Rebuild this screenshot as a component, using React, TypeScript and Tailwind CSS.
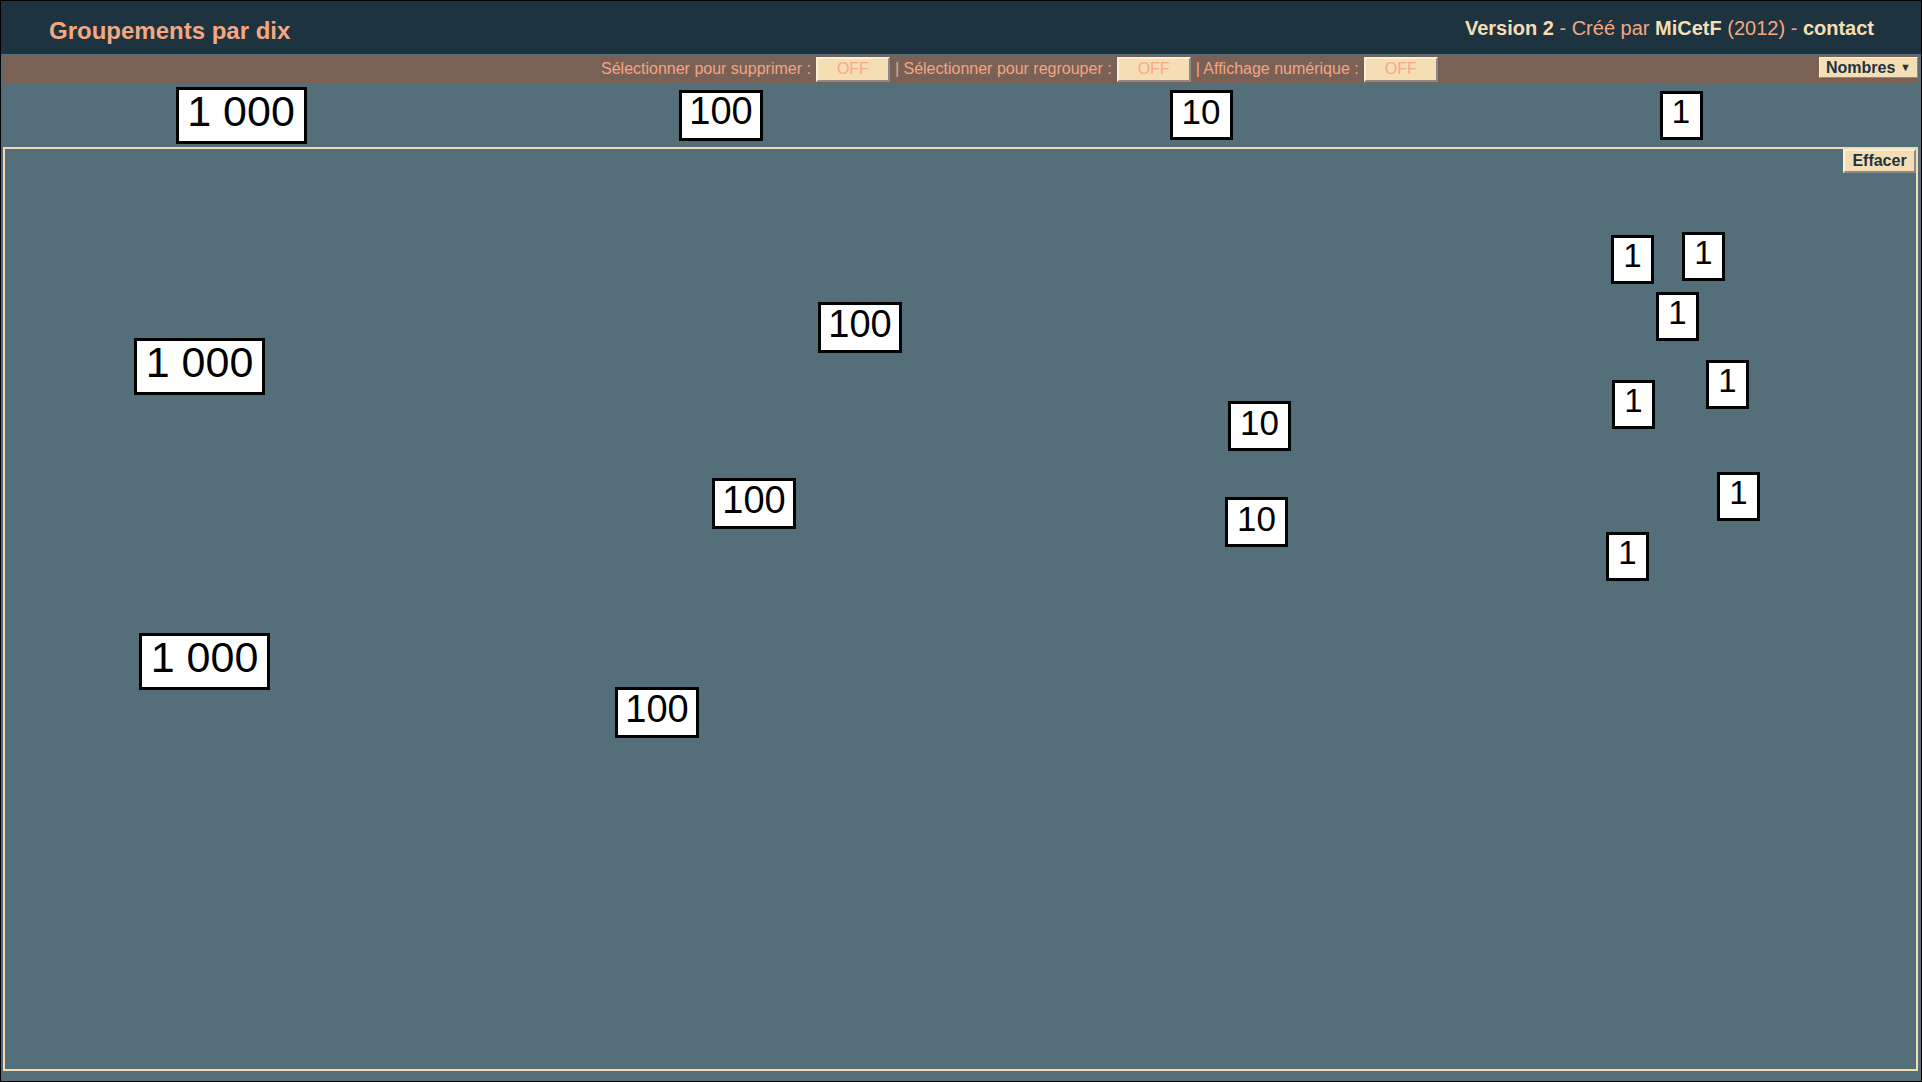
const FONT = "font-['Liberation_Sans',Arial,sans-serif]";

type Kind = "1000" | "100" | "10" | "1";

const cardStyles: Record<Kind, { box: string; label: string }> = {
  "1000": { box: "w-[131px] h-[57px] text-[43px]", label: "1 000" },
  "100": { box: "w-[84px] h-[51px] text-[38px]", label: "100" },
  "10": { box: "w-[63px] h-[50px] text-[35px]", label: "10" },
  "1": { box: "w-[43px] h-[49px] text-[33px]", label: "1" },
};

function Card({ kind }: { kind: Kind }) {
  const s = cardStyles[kind];
  return (
    <div
      className={`${s.box} flex items-center justify-center pb-2 bg-white border-[3px] border-black text-black leading-none select-none`}
    >
      {s.label}
    </div>
  );
}

// positions on the work area (px from top-left of inner area)
const placed: { kind: Kind; x: number; y: number }[] = [
  { kind: "1000", x: 129, y: 189 },
  { kind: "1000", x: 134, y: 484 },
  { kind: "100", x: 813, y: 153 },
  { kind: "100", x: 707, y: 329 },
  { kind: "100", x: 610, y: 538 },
  { kind: "10", x: 1223, y: 252 },
  { kind: "10", x: 1220, y: 348 },
  { kind: "1", x: 1606, y: 86 },
  { kind: "1", x: 1677, y: 83 },
  { kind: "1", x: 1651, y: 143 },
  { kind: "1", x: 1701, y: 211 },
  { kind: "1", x: 1607, y: 231 },
  { kind: "1", x: 1712, y: 323 },
  { kind: "1", x: 1601, y: 383 },
];

function OffButton() {
  return (
    <button className="w-[74px] h-[25px] flex items-center justify-center leading-none bg-[#f5deb3] text-[#f7a98a] text-[16px] border-2 border-t-[#fbefd6] border-l-[#fbefd6] border-b-[#8a8a8a] border-r-[#8a8a8a]">
      OFF
    </button>
  );
}

export default function App() {
  return (
    <div
      className={`${FONT} w-[1922px] h-[1082px] border border-black bg-[#546e7a] flex flex-col overflow-hidden`}
    >
      {/* title bar */}
      <div className="h-[53px] shrink-0 bg-[#1d3340] flex items-start justify-between pl-[48px] pr-[47px] pt-[16px]">
        <div className="text-[24px] leading-[27px] font-bold text-[#f4a882]">Groupements par dix</div>
        <div className="text-[20px] leading-[23px] text-[#f4a882]">
          <span className="font-bold text-[#f5deb3]">Version 2</span> - Créé par{" "}
          <span className="font-bold text-[#f5deb3]">MiCetF</span> (2012) -{" "}
          <span className="font-bold text-[#f5deb3]">contact</span>
        </div>
      </div>

      {/* options bar */}
      <div className="h-[28px] shrink-0 mt-px ml-[2px] mr-[3px] bg-[#7a6156] flex items-center text-[16px] text-[#f4a582]">
        <div className="ml-[598px] flex items-center gap-[5px] whitespace-nowrap">
          <span>Sélectionner pour supprimer :</span>
          <OffButton />
          <span>| Sélectionner pour regrouper :</span>
          <OffButton />
          <span>| Affichage numérique :</span>
          <OffButton />
        </div>
        <div className="ml-auto self-start mt-[2px] h-[21px] w-[99px] bg-[#f5deb3] border border-t-[#fbefd6] border-l-[#fbefd6] border-b-[#8a8a8a] border-r-[#8a8a8a] flex items-center justify-between pl-[6px] pr-[6px] text-[#1d3340] font-bold leading-none">
          <span>Nombres</span>
          <span className="text-[11px]">▼</span>
        </div>
      </div>

      {/* palette */}
      <div className="h-[64px] shrink-0 grid grid-cols-4 items-center justify-items-center">
        <Card kind="1000" />
        <Card kind="100" />
        <Card kind="10" />
        <Card kind="1" />
      </div>

      {/* work area */}
      <div className="relative h-[924px] shrink-0 ml-[2px] mr-[3px] border-2 border-[#f0dcb0]">
        <button className="absolute top-0 right-0 w-[73px] h-[24px] flex items-center justify-center bg-[#f5deb3] text-[#1d3340] font-bold text-[16px] leading-none border-2 border-t-[#fbefd6] border-l-[#fbefd6] border-b-[#8a8a8a] border-r-[#8a8a8a]">
          Effacer
        </button>
        {placed.map((p, i) => (
          <div key={i} className="absolute" style={{ left: p.x, top: p.y }}>
            <Card kind={p.kind} />
          </div>
        ))}
      </div>
    </div>
  );
}
